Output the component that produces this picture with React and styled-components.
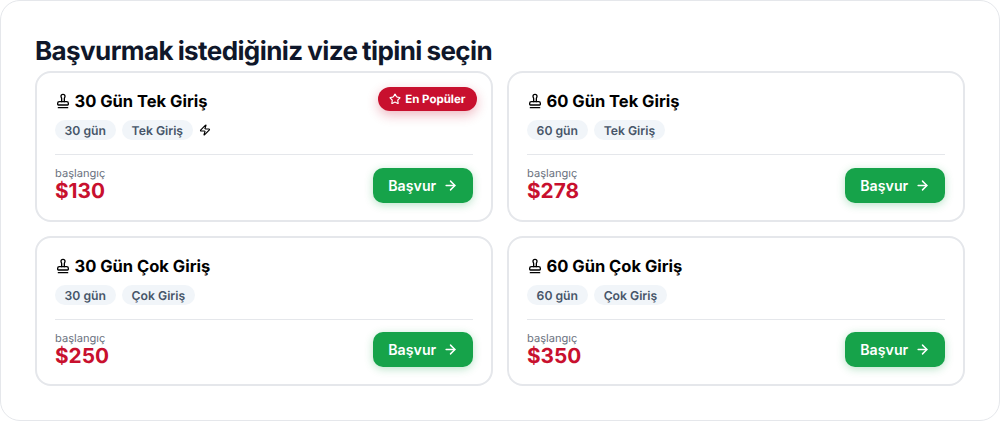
import React from "react";
import styled, { createGlobalStyle } from "styled-components";
import { ArrowRight, Stamp, Star, Zap } from "lucide-react";

const visas = [
  { id: 1, name: "30 Gün Tek Giriş", days: "30 gün", entry: "Tek Giriş", price: "$130", popular: true, fast: true },
  { id: 2, name: "60 Gün Tek Giriş", days: "60 gün", entry: "Tek Giriş", price: "$278" },
  { id: 3, name: "30 Gün Çok Giriş", days: "30 gün", entry: "Çok Giriş", price: "$250" },
  { id: 4, name: "60 Gün Çok Giriş", days: "60 gün", entry: "Çok Giriş", price: "$350" },
];

export default function App() {
  return (
    <>
      <GlobalStyle />
      <Panel>
        <Heading>Başvurmak istediğiniz vize tipini seçin</Heading>
        <Grid>
          {visas.map((visa) => (
            <Card key={visa.id}>
              {visa.popular && (
                <Badge>
                  <Star size={12} strokeWidth={2.3} />
                  En Popüler
                </Badge>
              )}
              <Title>
                <Stamp size={16} />
                {visa.name}
              </Title>
              <Tags>
                <Tag>{visa.days}</Tag>
                <Tag>{visa.entry}</Tag>
                {visa.fast && <Zap size={12} strokeWidth={2.3} />}
              </Tags>
              <Footer>
                <PriceBlock>
                  <PriceLabel>başlangıç</PriceLabel>
                  <Price>{visa.price}</Price>
                </PriceBlock>
                <ApplyButton>
                  Başvur
                  <ArrowRight size={15} strokeWidth={2.3} />
                </ApplyButton>
              </Footer>
            </Card>
          ))}
        </Grid>
      </Panel>
    </>
  );
}

const GlobalStyle = createGlobalStyle`
  * {
    box-sizing: border-box;
  }
  body {
    margin: 0;
    background: #fff;
    font-family: Inter, "Liberation Sans", sans-serif;
    text-rendering: geometricPrecision;
  }
`;

const Panel = styled.section`
  width: 1000px;
  height: 421px;
  padding: 30px 34px 0;
  background: #fff;
  border: 1px solid #e5e7eb;
  border-radius: 20px;
`;

const Heading = styled.h2`
  margin: 0;
  height: 40px;
  color: #0f172a;
  font-size: 26px;
  font-weight: 700;
  line-height: 41px;
  letter-spacing: -0.6px;
  word-spacing: -0.8px;
  white-space: nowrap;
`;

const Grid = styled.div`
  display: grid;
  grid-template-columns: 1fr 1fr;
  gap: 14.1px 14px;
`;

const Card = styled.article`
  position: relative;
  height: 150.5px;
  padding: 18px;
  border: 2px solid #e5e7eb;
  border-radius: 16px;
`;

const Badge = styled.div`
  position: absolute;
  top: 14px;
  right: 14px;
  display: flex;
  align-items: center;
  gap: 4px;
  height: 24px;
  padding: 0 11.5px 0 11px;
  border-radius: 12px;
  background: #c8102e;
  color: #fff;
  font-size: 11.5px;
  font-weight: 700;
  box-shadow: 0 4px 12px rgba(200, 16, 46, 0.3);
`;

const Title = styled.h3`
  display: flex;
  align-items: center;
  gap: 3.5px;
  margin: 0 0 8.4px;
  color: #000;
  font-size: 16.5px;
  font-weight: 700;
  line-height: 21px;

  svg {
    margin-top: -1px;
  }
`;

const Tags = styled.div`
  display: flex;
  align-items: center;
  gap: 6.4px;
`;

const Tag = styled.span`
  height: 20px;
  padding: 0 9.6px;
  border-radius: 10px;
  background: #f1f5f9;
  color: #475569;
  font-size: 12.2px;
  font-weight: 600;
  line-height: 21px;
`;

const Footer = styled.div`
  display: flex;
  align-items: flex-start;
  justify-content: space-between;
  margin-top: 13.6px;
  padding-top: 12.8px;
  border-top: 1px solid #e5e7eb;
`;

const PriceBlock = styled.div`
  margin-top: -0.3px;
`;

const PriceLabel = styled.div`
  color: #6b7280;
  font-size: 11.1px;
  line-height: 13.6px;
`;

const Price = styled.div`
  color: #c8102e;
  font-size: 20.8px;
  font-weight: 700;
  line-height: 21px;
`;

const ApplyButton = styled.button`
  display: flex;
  align-items: center;
  justify-content: center;
  gap: 6.5px;
  width: 100px;
  height: 35px;
  padding: 0;
  border: 0;
  border-radius: 10px;
  background: #16a34a;
  color: #fff;
  font-family: inherit;
  font-size: 14.2px;
  font-weight: 600;
  box-shadow: 0 2px 8px rgba(22, 163, 74, 0.3);
`;
